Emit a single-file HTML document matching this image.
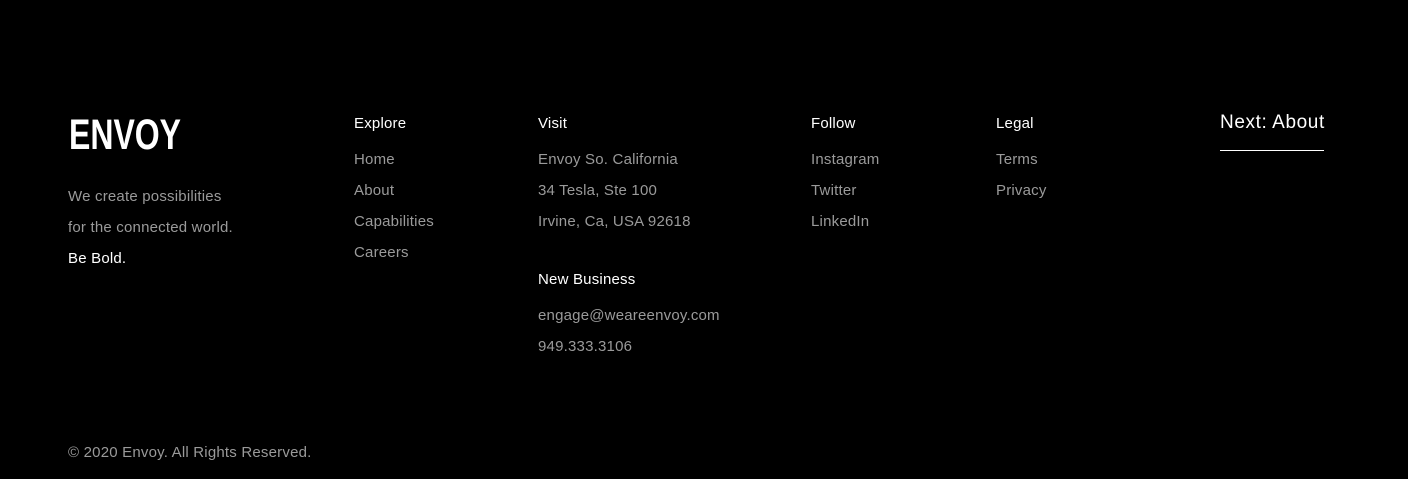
<!DOCTYPE html>
<html><head><meta charset="utf-8"><style>
html,body{margin:0;padding:0;background:#000;width:1408px;height:479px;overflow:hidden;position:relative;font-family:"Liberation Sans",sans-serif;font-size:15px}
.t{position:absolute;line-height:20px;white-space:nowrap;color:#9a9a9a;letter-spacing:0.2px}
.h{color:#fff}
</style></head><body>
<svg style="position:absolute;left:68px;top:112px" width="116" height="40"><text x="1" y="37" textLength="112" lengthAdjust="spacingAndGlyphs" font-family="Liberation Sans Narrow, Liberation Sans, sans-serif" font-weight="bold" font-size="43" fill="#fff">ENVOY</text></svg>
<div class="t" style="left:68px;top:187px">We create possibilities</div>
<div class="t" style="left:68px;top:218px">for the connected world.</div>
<div class="t h" style="left:68px;top:249px">Be Bold.</div>

<div class="t h" style="left:354px;top:114px">Explore</div>
<div class="t" style="left:354px;top:150px">Home</div>
<div class="t" style="left:354px;top:181px">About</div>
<div class="t" style="left:354px;top:212px">Capabilities</div>
<div class="t" style="left:354px;top:243px">Careers</div>

<div class="t h" style="left:538px;top:114px">Visit</div>
<div class="t" style="left:538px;top:150px">Envoy So. California</div>
<div class="t" style="left:538px;top:181px">34 Tesla, Ste 100</div>
<div class="t" style="left:538px;top:212px">Irvine, Ca, USA 92618</div>
<div class="t h" style="left:538px;top:270px">New Business</div>
<div class="t" style="left:538px;top:306px">engage@weareenvoy.com</div>
<div class="t" style="left:538px;top:337px">949.333.3106</div>

<div class="t h" style="left:811px;top:114px">Follow</div>
<div class="t" style="left:811px;top:150px">Instagram</div>
<div class="t" style="left:811px;top:181px">Twitter</div>
<div class="t" style="left:811px;top:212px">LinkedIn</div>

<div class="t h" style="left:996px;top:114px">Legal</div>
<div class="t" style="left:996px;top:150px">Terms</div>
<div class="t" style="left:996px;top:181px">Privacy</div>

<div class="t h" style="left:1220px;top:111px;font-size:19px;line-height:24px;letter-spacing:0.6px">Next: About</div>
<div style="position:absolute;left:1220px;top:150px;width:104px;height:1px;background:#fff"></div>

<div class="t" style="left:68px;top:443px">© 2020 Envoy. All Rights Reserved.</div>
</body></html>
